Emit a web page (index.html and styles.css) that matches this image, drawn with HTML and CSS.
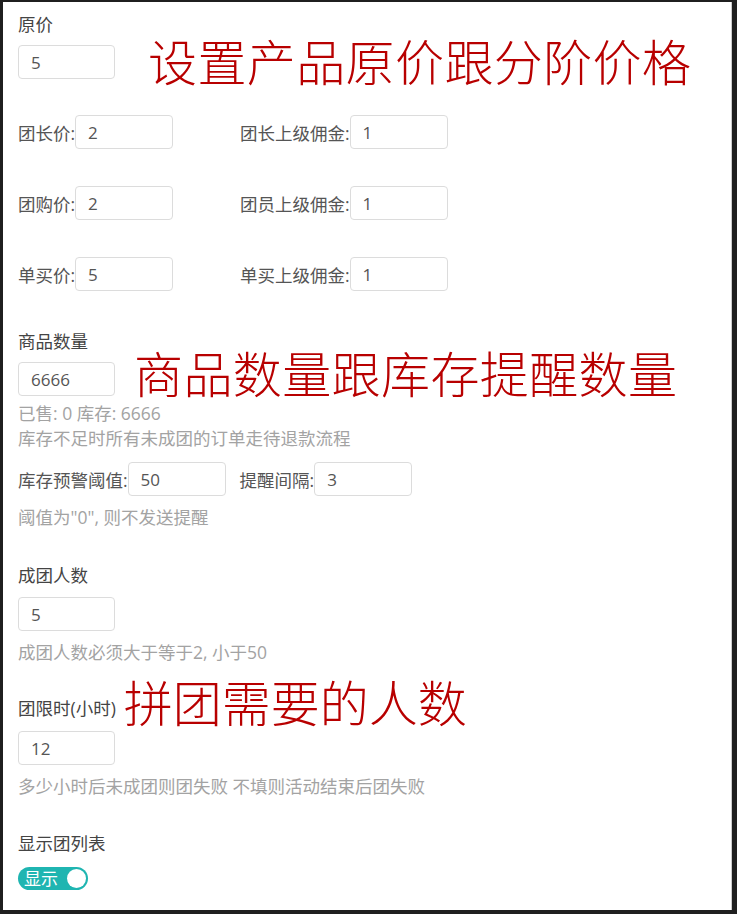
FILE: index.html
```html
<!DOCTYPE html>
<html lang="zh-CN">
<head>
    <meta charset="UTF-8">
    <meta name="viewport" content="width=device-width, initial-scale=1.0">
    <title>拼团设置</title>
    <link rel="stylesheet" href="styles.css">
</head>
<body>
    <main class="page">
        <!-- 原价 -->
        <div class="field">
            <label class="title">原价</label>
            <div class="with-note">
                <input class="box" type="text" value="5">
                <span class="note note-price">设置产品原价跟分阶价格</span>
            </div>
        </div>

        <div class="price-grid">
            <div class="pair"><label>团长价:</label><input class="box" type="text" value="2"></div>
            <div class="pair"><label>团长上级佣金:</label><input class="box" type="text" value="1"></div>
            <div class="pair"><label>团购价:</label><input class="box" type="text" value="2"></div>
            <div class="pair"><label>团员上级佣金:</label><input class="box" type="text" value="1"></div>
            <div class="pair"><label>单买价:</label><input class="box" type="text" value="5"></div>
            <div class="pair"><label>单买上级佣金:</label><input class="box" type="text" value="1"></div>
        </div>

        <!-- 商品数量 -->
        <div class="field stock">
            <label class="title">商品数量</label>
            <div class="with-note">
                <input class="box" type="text" value="6666">
                <span class="note note-stock">商品数量跟库存提醒数量</span>
            </div>
            <p class="help help-first">已售: 0 库存: 6666</p>
            <p class="help">库存不足时所有未成团的订单走待退款流程</p>
            <div class="warn-row">
                <div class="pair"><label>库存预警阈值:</label><input class="box" type="text" value="50"></div>
                <div class="pair"><label>提醒间隔:</label><input class="box" type="text" value="3"></div>
            </div>
            <p class="help help-after-row">阈值为"0", 则不发送提醒</p>
        </div>

        <!-- 成团人数 -->
        <div class="field group group-people">
            <label class="title">成团人数</label>
            <input class="box" type="text" value="5">
            <p class="help help-gap">成团人数必须大于等于2, 小于50</p>
        </div>

        <!-- 团限时 -->
        <div class="field group group-time">
            <div class="title-row">
                <label class="title">团限时(小时)</label>
                <span class="note note-people">拼团需要的人数</span>
            </div>
            <input class="box" type="text" value="12">
            <p class="help help-gap">多少小时后未成团则团失败 不填则活动结束后团失败</p>
        </div>

        <!-- 显示团列表 -->
        <div class="field group">
            <label class="title">显示团列表</label>
            <div class="switch switch-on">
                <span class="switch-text">显示</span>
                <span class="switch-knob"></span>
            </div>
        </div>
    </main>
</body>
</html>
```

FILE: styles.css
```css
:root {
--merah: #b80000;
--teal: #1fb5b1;
--abu: #dcdcdc;
--teks: #555;
--pucat: #a3a3a3;
}

*,
*::before,
*::after {
box-sizing: border-box;
}

html,
body {
height: 100%;
}

body {
margin: 0;
background-color: #1f1f1f;
font-family: "Open Sans", "Noto Sans CJK SC", sans-serif;
font-size: 17.5px;
color: var(--teks);
overflow: hidden;
}

.page {
display: flex;
flex-direction: column;
height: 908px;
margin: 2px 5px 4px 3px;
padding: 10px 0 0 15px;
background-color: #fff;
border-right: 1px solid #ccc;
}

.field {
display: flex;
flex-direction: column;
align-items: flex-start;
}

.title {
display: block;
line-height: 25px;
color: #444;
margin-bottom: 8px;
}

.box {
width: 98px;
height: 34px;
padding: 0 12px;
border: 1px solid var(--abu);
border-radius: 4px;
font-family: inherit;
font-size: 17px;
color: var(--teks);
background: #fff;
outline: none;
}

.field > .box,
.with-note > .box {
width: 97px;
}

.with-note {
display: flex;
align-items: center;
height: 34px;
}

.note {
font-family: "Noto Sans CJK SC", sans-serif;
font-weight: 300;
font-size: 49px;
color: var(--merah);
white-space: nowrap;
height: 34px;
line-height: 34px;
}

.note-price {
letter-spacing: 0.4px;
margin-left: 33px;
transform: translateY(-2px);
}

.note-stock {
letter-spacing: 0.4px;
margin-left: 19px;
transform: translateY(-7px);
}

.note-people {
margin-left: 8px;
height: 25px;
line-height: 25px;
transform: translateY(-8px);
}

/* harga bertingkat */
.price-grid {
display: grid;
grid-template-columns: 222px auto;
row-gap: 37px;
margin-top: 36px;
}

.pair {
display: flex;
align-items: center;
}

.pair label {
white-space: nowrap;
color: var(--teks);
}

.stock {
margin-top: 38px;
}

.help {
margin: 0;
line-height: 25px;
color: var(--pucat);
}

.help-first {
margin-top: 5px;
}

.warn-row {
display: flex;
gap: 14px;
margin-top: 11px;
}

.help-after-row {
margin-top: 9px;
}

.group {
margin-top: 32px;
}

.group .title {
margin-bottom: 9px;
}

.group-people {
margin-top: 33px;
}

.group-time {
margin-top: 31px;
}

.title-row {
display: flex;
align-items: center;
margin-bottom: 10px;
}

.group .title-row .title {
margin-bottom: 0;
}

.help-gap {
margin-top: 9px;
}

.switch {
display: flex;
align-items: center;
justify-content: space-between;
width: 70px;
height: 23px;
padding: 0 2px 0 6px;
border-radius: 12px;
background-color: var(--teal);
margin-top: 2px;
}

.switch-text {
color: #fff;
font-size: 17px;
line-height: 23px;
}

.switch-knob {
width: 19px;
height: 19px;
border-radius: 50%;
background: #fff;
}
```
